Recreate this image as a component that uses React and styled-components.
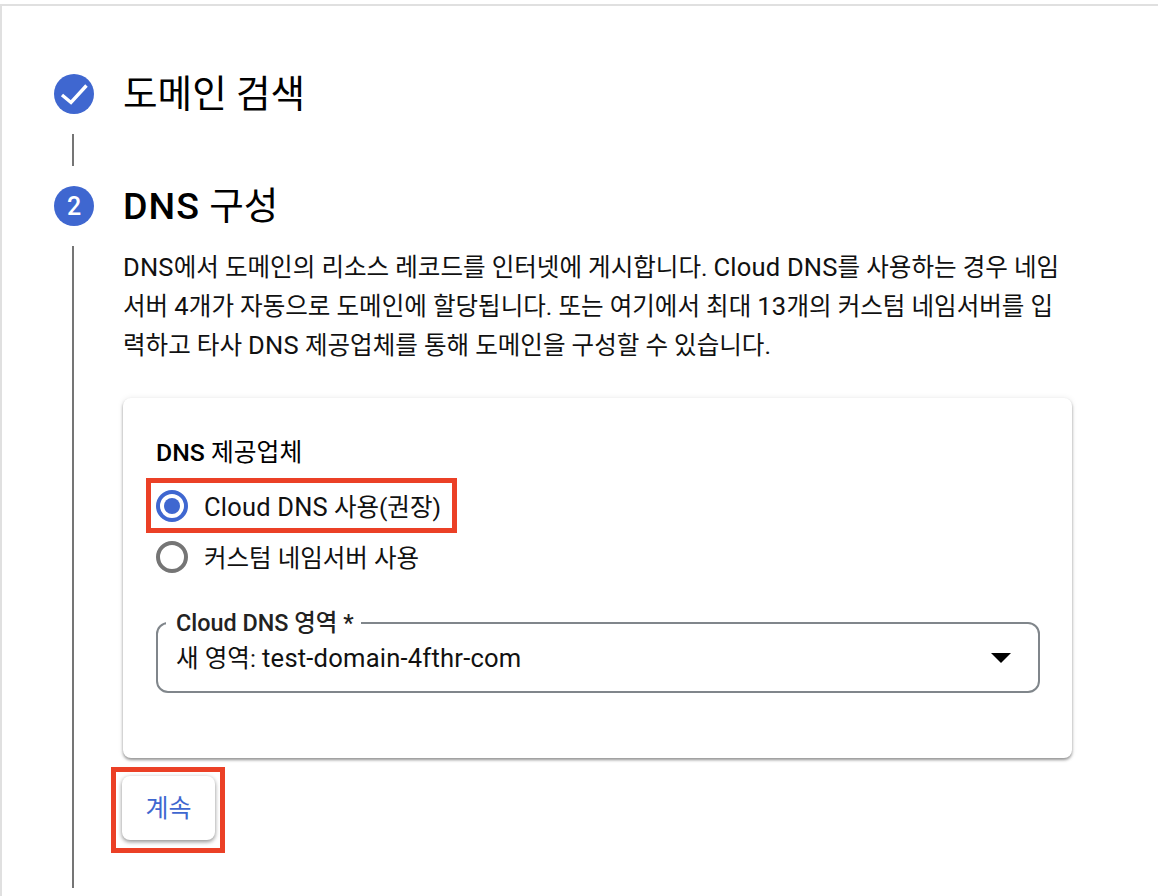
import styled, { createGlobalStyle } from 'styled-components'

const GlobalStyle = createGlobalStyle`
    html, body {
        margin: 0;
        padding: 0;
        background: #fff;
    }
    body {
        font-family: Roboto, "Noto Sans CJK KR", sans-serif;
        color: #000;
    }
`

const Page = styled.div`
    width: 1158px;
    height: 892px;
    margin-top: 4px;
    box-sizing: border-box;
    border-top: 2px solid #e0e0e0;
    border-left: 2px solid #e0e0e0;
    padding: 68px 86px 0 52px;
    overflow: hidden;
`

const StepHead = styled.div`
    display: flex;
    align-items: center;
    gap: 29px;
    height: 40px;
`

const Badge = styled.div`
    width: 40px;
    height: 40px;
    flex: none;
    border-radius: 50%;
    background: #3f67d0;
    color: #fff;
    display: flex;
    align-items: center;
    justify-content: center;
    font-size: 25px;
    font-weight: 500;
`

const Title = styled.h2`
    margin: 0;
    font-size: 37.6px;
    line-height: 40px;
    font-weight: 400;
    color: #000;
    span {
        letter-spacing: 1px;
    }
`

const Medium = styled.span`
    font-weight: 500;
`

// roman letters run a bit larger than the hangul next to them
const Latin = styled.span`
    font-size: 1.04em;
    letter-spacing: 0.2px;
`

const Connector = styled.div`
    width: 2px;
    margin-left: 18px;
    background: #757575;
    height: 32px;
    margin-top: 20px;
    margin-bottom: 20px;
`

const StepBody = styled.div`
    display: flex;
    margin-top: 20px;
`

const Rail = styled.div`
    width: 2px;
    height: 642px;
    flex: none;
    margin-left: 18px;
    background: #757575;
`

const Content = styled.div`
    flex: 1;
    min-width: 0;
    padding: 2px 0 0 49px;
`

const Description = styled.p`
    margin: 0;
    font-size: 24.55px;
    line-height: 39px;
    color: #111;
    white-space: nowrap;
`

const Card = styled.section`
    margin-top: 33px;
    height: 360px;
    box-sizing: border-box;
    padding: 37px 32px 0 33px;
    border-radius: 8px;
    background: #fff;
    box-shadow: 0 2px 3px rgba(0, 0, 0, 0.4), 0 0 6px rgba(0, 0, 0, 0.08);
`

const GroupLabel = styled.div`
    font-size: 24.8px;
    line-height: 36px;
    margin-bottom: 9px;
`

const RadioRow = styled.label`
    display: flex;
    align-items: center;
    gap: 16px;
    height: 51px;
    box-sizing: border-box;
    font-size: 24.5px;
    color: #111;
    width: fit-content;
    ${(p) => p.$marked && `
        margin-left: -8px;
        padding: 0 14px 0 8px;
        outline: 5px solid #eb4026;
        outline-offset: -3px;
    `}
`

const RadioText = styled.span`
    display: block;
    white-space: nowrap;
`

const RadioDot = styled.span`
    width: 32px;
    height: 32px;
    flex: none;
    box-sizing: border-box;
    border-radius: 50%;
    border: 4px solid ${(p) => (p.$checked ? '#3f67d0' : '#757575')};
    display: flex;
    align-items: center;
    justify-content: center;
    &::after {
        content: '';
        width: 16px;
        height: 16px;
        border-radius: 50%;
        background: ${(p) => (p.$checked ? '#3f67d0' : 'transparent')};
    }
`

const SelectBox = styled.fieldset`
    margin: 29px 0 0;
    padding: 0 18px 10px 8px;
    height: 82px;
    box-sizing: border-box;
    border: 2px solid #80868b;
    border-radius: 12px;
    display: flex;
    align-items: center;
    justify-content: space-between;
`

const SelectLegend = styled.legend`
    padding: 0 7px 0 10px;
    font-size: 23.4px;
    line-height: 24px;
    font-weight: 500;
    color: #222;
`

const SelectValue = styled.span`
    margin-left: 10px;
    font-size: 24.6px;
    line-height: 30px;
    color: #111;
`

const Caret = styled.span`
    width: 0;
    height: 0;
    border-left: 10px solid transparent;
    border-right: 10px solid transparent;
    border-top: 10px solid #000;
    margin-right: 9px;
`

const ButtonFrame = styled.div`
    margin: 9px 0 0 -12px;
    width: fit-content;
    padding: 4px 5px 8px 6px;
    border: 5px solid #eb4026;
`

const ContinueButton = styled.button`
    display: block;
    width: 93px;
    height: 64px;
    border: 0;
    padding: 0 0 4px;
    border-radius: 8px;
    background: #fff;
    color: #3f67d0;
    font: 400 25px Roboto, "Noto Sans CJK KR", sans-serif;
    box-shadow: 0 2px 4px rgba(0, 0, 0, 0.4), 0 0 5px rgba(0, 0, 0, 0.08);
`

function Check() {
    return (
        <svg width="28" height="28" viewBox="0 0 28 28" fill="none">
            <path d="M2 15 L11 22.5 L26.5 5.5" stroke="#fff" strokeWidth="3.4" />
        </svg>
    )
}

export default function App() {
    return (
        <>
            <GlobalStyle />
            <Page>
                <StepHead>
                    <Badge><Check /></Badge>
                    <Title>도메인 검색</Title>
                </StepHead>
                <Connector />
                <StepHead>
                    <Badge>2</Badge>
                    <Title><Medium>DNS</Medium> 구성</Title>
                </StepHead>
                <StepBody>
                    <Rail />
                    <Content>
                        <Description>
                            <Latin>DNS</Latin>에서 도메인의 리소스 레코드를 인터넷에 게시합니다. <Latin>Cloud DNS</Latin>를 사용하는 경우 네임
                            <br />
                            서버 <Latin>4</Latin>개가 자동으로 도메인에 할당됩니다. 또는 여기에서 최대 <Latin>13</Latin>개의 커스텀 네임서버를 입
                            <br />
                            력하고 타사 <Latin>DNS</Latin> 제공업체를 통해 도메인을 구성할 수 있습니다.
                        </Description>
                        <Card>
                            <GroupLabel><Medium>DNS</Medium> 제공업체</GroupLabel>
                            <RadioRow $marked>
                                <RadioDot $checked />
                                <RadioText><Latin>Cloud DNS</Latin> 사용(권장)</RadioText>
                            </RadioRow>
                            <RadioRow>
                                <RadioDot />
                                <RadioText>커스텀 네임서버 사용</RadioText>
                            </RadioRow>
                            <SelectBox>
                                <SelectLegend>Cloud DNS 영역 *</SelectLegend>
                                <SelectValue>새 영역: <Latin>test-domain-4fthr-com</Latin></SelectValue>
                                <Caret />
                            </SelectBox>
                        </Card>
                        <ButtonFrame>
                            <ContinueButton>계속</ContinueButton>
                        </ButtonFrame>
                    </Content>
                </StepBody>
            </Page>
        </>
    )
}
